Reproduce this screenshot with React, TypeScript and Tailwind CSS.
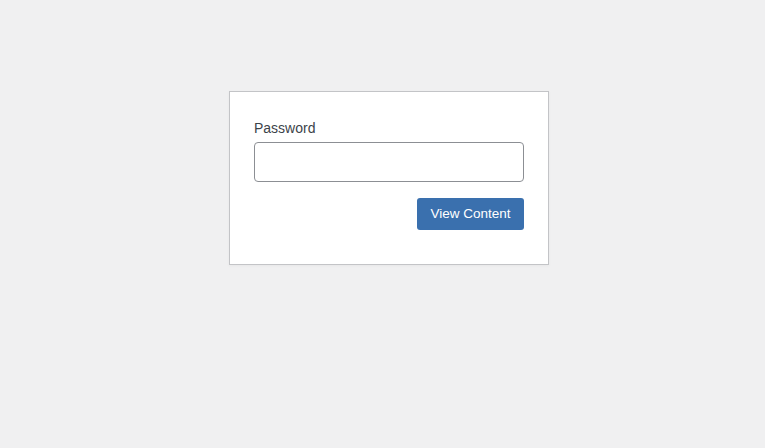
import React from 'react';

const App: React.FC = () => {
    return (
        <div className="min-h-[448px] w-full bg-[#f0f0f1] pt-[91px] pl-[229px] font-['Liberation_Sans',Arial,sans-serif]">
            <form
                className="w-[320px] bg-white border border-[#c3c4c7] shadow-[0_1px_3px_rgba(0,0,0,0.04)] pt-[26px] px-[24px] pb-[34px]"
                onSubmit={e => e.preventDefault()}
            >
                <label htmlFor="pwd" className="block text-[14px] leading-[21px] text-[#3c434a]">Password</label>
                <input
                    id="pwd"
                    type="password"
                    className="mt-[3px] block w-full h-[40px] rounded-[4px] border border-[#8c8f94] bg-white px-2 text-[20px] outline-none"
                />
                <div className="mt-[16px] flex justify-end">
                    <button
                        type="submit"
                        className="h-[32px] w-[107px] rounded-[3px] bg-[#3a70ae] text-white text-[13.5px] leading-[30px]"
                    >
                        View Content
                    </button>
                </div>
            </form>
        </div>
    );
};

export default App;
